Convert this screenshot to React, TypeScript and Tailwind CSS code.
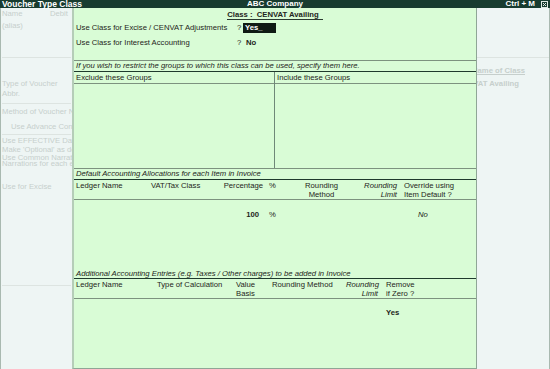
const TitleBar = () => {
    return (
        <div className="h-[8px] bg-[#183c30] text-white font-bold text-[8px] leading-[8px] flex items-center whitespace-nowrap">
            <div className="flex-1 pl-[2px] text-[8.5px]">Voucher Type Class</div>
            <div>ABC Company</div>
            <div className="flex-1 flex justify-end items-center gap-[6px] pr-[2px]">
                <span>Ctrl + M</span>
                <svg width="7" height="7" viewBox="0 0 7 7">
                    <rect x="0.5" y="0.5" width="6" height="6" fill="none" stroke="#dfe8e4" strokeWidth="1" />
                    <path d="M2 2 L5 5 M5 2 L2 5" stroke="#dfe8e4" strokeWidth="1" />
                </svg>
            </div>
        </div>
    );
};

const LeftPanel = () => {
    return (
        <div className="w-[72px] shrink-0 border-l border-[#a9b9b0] flex flex-col text-[#c6cfcc] whitespace-nowrap overflow-hidden">
            <div className="flex pt-[1px] pl-[1px]">
                <div className="w-[48px]">Name</div>
                <div>Debit</div>
            </div>
            <div className="mt-[3px] pl-[1px]">(alias)</div>
            <div className="mt-[27px] mx-[1px] h-px bg-[#dde4e1]" />
            <div className="mt-[21px] pl-[1px]">Type of Voucher</div>
            <div className="mt-[1px] pl-[1px]">Abbr.</div>
            <div className="mt-[5px] mx-[1px] h-px bg-[#dde4e1]" />
            <div className="mt-[3px] pl-[1px]">Method of Voucher Numbering</div>
            <div className="mt-[6px] pl-[10px]">Use Advance Configuration</div>
            <div className="mt-[3px] mx-[1px] h-px bg-[#dde4e1]" />
            <div className="mt-[1px] pl-[1px]">Use EFFECTIVE Dates</div>
            <div className="pl-[1px]">Make 'Optional' as default</div>
            <div className="pl-[1px] h-[6px] leading-[7px]">Use Common Narration</div>
            <div className="pl-[1px] h-[7px] leading-[7px]">Narrations for each entry</div>
            <div className="mt-[15px] pl-[1px]">Use for Excise</div>
            <div className="mt-[94px] mx-[1px] h-px bg-[#dde4e1]" />
        </div>
    );
};

const RightPanel = () => {
    return (
        <div className="w-[73px] shrink-0 border-r border-[#a9b9b0] flex flex-col text-[#c6cfcc] font-bold whitespace-nowrap overflow-hidden">
            <div className="mt-[49px] h-px bg-[#dde4e1]" />
            <div className="mt-[8px] ml-[-5px] underline">Name of Class</div>
            <div className="mt-[4px] ml-[-20px]">CENVAT Availing</div>
        </div>
    );
};

const Main = () => {
    return (
        <div className="w-[405px] shrink-0 bg-[#d9fcd6] border-l-2 border-l-[#b5cdb8] border-r border-r-[#8fa696] border-b border-b-[#8fa696] flex flex-col whitespace-nowrap">
            <div className="h-[14px] flex justify-center pt-[3px]">
                <div className="h-[9px] leading-[8px] font-bold border-b border-[#2a3a30] pr-[4px]">Class :&nbsp; CENVAT Availing</div>
            </div>
            <div className="h-[11px] flex items-center pl-[2px]">
                <div className="w-[161px]">Use Class for Excise / CENVAT Adjustments</div>
                <div className="w-[6px]">?</div>
                <div className="w-[33px] h-[10px] bg-[#0f1a14] text-white font-bold pl-[2px] leading-[10px]">Yes_</div>
            </div>
            <div className="h-[18px] flex items-center pl-[2px]">
                <div className="w-[161px]">Use Class for Interest Accounting</div>
                <div className="w-[9px]">?</div>
                <div className="font-bold">No</div>
            </div>
            <div className="h-[9px]" />
            <div className="h-px bg-[#7d927f]" />
            <div className="h-[10px] pl-[2px] italic">If you wish to restrict the groups to which this class can be used, specify them here.</div>
            <div className="h-px bg-[#1f3a2d]" />
            <div className="h-[96px] flex">
                <div className="w-[201px] border-r border-[#6f8878]">
                    <div className="h-[12px] leading-[11px] pl-[2px] border-b border-[#7d927f]">Exclude these Groups</div>
                </div>
                <div className="flex-1">
                    <div className="h-[12px] leading-[11px] pl-[2px] border-b border-[#7d927f]">Include these Groups</div>
                </div>
            </div>
            <div className="h-px bg-[#7d927f]" />
            <div className="h-[10px] pl-[2px] italic">Default Accounting Allocations for each Item in Invoice</div>
            <div className="h-px bg-[#1f3a2d]" />
            <div className="h-[19px] pt-[1px] pl-[2px] flex">
                <div className="w-[75px]">Ledger Name</div>
                <div className="w-[60px]">VAT/Tax Class</div>
                <div className="w-[52px] text-right">Percentage</div>
                <div className="w-[6px]" />
                <div className="w-[30px]">%</div>
                <div className="w-[45px] text-center">
                    <div>Rounding</div>
                    <div>Method</div>
                </div>
                <div className="w-[53px] text-right italic">
                    <div>Rounding</div>
                    <div>Limit</div>
                </div>
                <div className="pl-[7px]">
                    <div>Override using</div>
                    <div>Item Default ?</div>
                </div>
            </div>
            <div className="h-px bg-[#7d927f]" />
            <div className="mt-[10px] h-[9px] pl-[2px] flex">
                <div className="w-[135px]" />
                <div className="w-[48px] text-right font-bold">100</div>
                <div className="w-[10px]" />
                <div className="w-[149px]">%</div>
                <div className="italic">No</div>
            </div>
            <div className="mt-[50px] h-[9px] pl-[2px] italic">Additional Accounting Entries (e.g. Taxes / Other charges) to be added in Invoice</div>
            <div className="h-px bg-[#1f3a2d]" />
            <div className="h-[19px] pt-[1px] pl-[2px] flex">
                <div className="w-[81px]">Ledger Name</div>
                <div className="w-[79px]">Type of Calculation</div>
                <div className="w-[36px]">
                    <div>Value</div>
                    <div>Basis</div>
                </div>
                <div className="w-[74px]">Rounding Method</div>
                <div className="w-[32px] text-right italic">
                    <div>Rounding</div>
                    <div>Limit</div>
                </div>
                <div className="pl-[8px]">
                    <div>Remove</div>
                    <div>if Zero ?</div>
                </div>
            </div>
            <div className="h-px bg-[#7d927f]" />
            <div className="mt-[9px] h-[9px] pl-[2px] flex">
                <div className="w-[310px]" />
                <div className="font-bold">Yes</div>
            </div>
        </div>
    );
};

const App = () => {
    return (
        <div className="w-[550px] h-[369px] flex flex-col overflow-hidden bg-[#eef5f4] font-['Liberation_Sans',Arial,sans-serif] text-[7.7px] leading-[9px] text-[#1e2420]">
            <TitleBar />
            <div className="flex flex-1 min-h-0">
                <LeftPanel />
                <Main />
                <RightPanel />
            </div>
        </div>
    );
};

export default App;
